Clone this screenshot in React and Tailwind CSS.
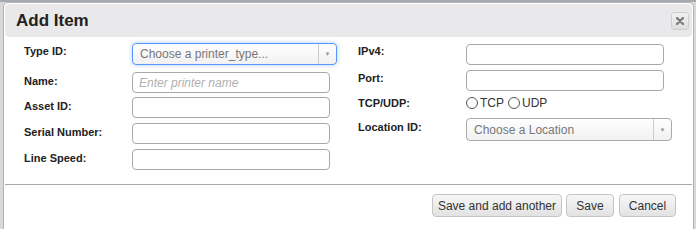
import React from 'react';

const font = { fontFamily: '"Liberation Sans", Arial, sans-serif' };

function Label({ children, className = '' }) {
  return (
    <label className={`w-[108px] shrink-0 text-[11px] font-bold leading-[14px] text-[#222] ${className}`}>
      {children}
    </label>
  );
}

function TextInput({ placeholder }) {
  return (
    <input
      type="text"
      placeholder={placeholder}
      className="h-[21px] w-[198px] rounded-[4px] border border-[#a9a9a9] bg-white px-[6px] text-[12px] italic text-[#333] outline-none placeholder:text-[#b0b0b0]"
    />
  );
}

function Select({ text, focused, width, height }) {
  return (
    <div
      className={`flex items-stretch rounded-[4px] border bg-gradient-to-b from-white to-[#f1f1f1] ${
        focused ? 'border-[#5897fb] shadow-[0_0_4px_rgba(88,151,251,0.5)]' : 'border-[#aaa]'
      }`}
      style={{ width, height }}
    >
      <span className="flex flex-1 items-center pl-[7px] text-[12px] text-[#777]">{text}</span>
      <span className="flex w-[18px] items-center justify-center border-l border-[#ccc]">
        <span className="text-[6px] leading-none text-[#999]">▼</span>
      </span>
    </div>
  );
}

function Radio({ label }) {
  return (
    <span className="flex items-center gap-[2px] text-[12px] leading-[14px] text-[#333]">
      <span className="inline-block h-[12px] w-[12px] rounded-full border border-[#555] bg-white" />
      {label}
    </span>
  );
}

function Button({ children, className = '' }) {
  return (
    <button
      className={`h-[23px] rounded-[4px] border border-[#c5c5c5] bg-gradient-to-b from-[#f7f7f7] to-[#e2e2e2] text-[12px] text-[#333] ${className}`}
    >
      {children}
    </button>
  );
}

export default function App() {
  return (
    <div className="h-[229px] w-[696px] overflow-hidden border-t-2 border-[#a4aab0] bg-[#d8d8d8] pl-[3px]" style={font}>
      <div className="h-[240px] w-[691px] rounded-[5px] border border-[#b4b4b4] bg-white p-[1px]">
        {/* Header */}
        <div className="flex h-[33px] items-center justify-between rounded-[4px] bg-[#e9e9eb] pl-[11px] pr-[3px]">
          <h2 className="text-[17px] font-bold text-[#222]">Add Item</h2>
          <button className="flex h-[18px] w-[18px] items-center justify-center rounded-[3px] border border-[#cfcfcf] bg-gradient-to-b from-[#f0f0f0] to-[#dedede]">
            <svg width="8" height="8" viewBox="0 0 8 8">
              <path d="M1 1L7 7M7 1L1 7" stroke="#777" strokeWidth="2.2" strokeLinecap="round" />
            </svg>
          </button>
        </div>

        {/* Form */}
        <div className="flex h-[147px] pl-[19px]">
          <div className="w-[334px]">
            <div className="mt-[6px] flex items-start">
              <Label className="pt-[1px]">Type ID:</Label>
              <Select text="Choose a printer_type..." focused width={205} height={22} />
            </div>
            <div className="mt-[7px] flex items-start">
              <Label className="pt-[2px]">Name:</Label>
              <TextInput placeholder="Enter printer name" />
            </div>
            <div className="mt-[4px] flex items-start">
              <Label className="pt-[2px]">Asset ID:</Label>
              <TextInput />
            </div>
            <div className="mt-[5px] flex items-start">
              <Label className="pt-[2px]">Serial Number:</Label>
              <TextInput />
            </div>
            <div className="mt-[5px] flex items-start">
              <Label className="pt-[2px]">Line Speed:</Label>
              <TextInput />
            </div>
          </div>
          <div>
            <div className="mt-[7px] flex items-start">
              <Label className="w-[107px]">IPv4:</Label>
              <TextInput />
            </div>
            <div className="mt-[5px] flex items-start">
              <Label className="w-[107px] pt-[1px]">Port:</Label>
              <TextInput />
            </div>
            <div className="mt-[5px] flex h-[14px] items-center">
              <Label className="w-[107px]">TCP/UDP:</Label>
              <div className="flex items-center gap-[4px]">
                <Radio label="TCP" />
                <Radio label="UDP" />
              </div>
            </div>
            <div className="mt-[8px] flex items-start">
              <Label className="w-[107px] pt-[2px]">Location ID:</Label>
              <Select text="Choose a Location" width={206} height={23} />
            </div>
          </div>
        </div>

        {/* Footer */}
        <div className="border-t border-[#a8a8a8]">
          <div className="flex justify-end gap-[4px] pr-[16px] pt-[9px]">
            <Button className="w-[130px]">Save and add another</Button>
            <Button className="w-[48px]">Save</Button>
            <Button className="ml-[1px] w-[57px]">Cancel</Button>
          </div>
        </div>
      </div>
    </div>
  );
}
